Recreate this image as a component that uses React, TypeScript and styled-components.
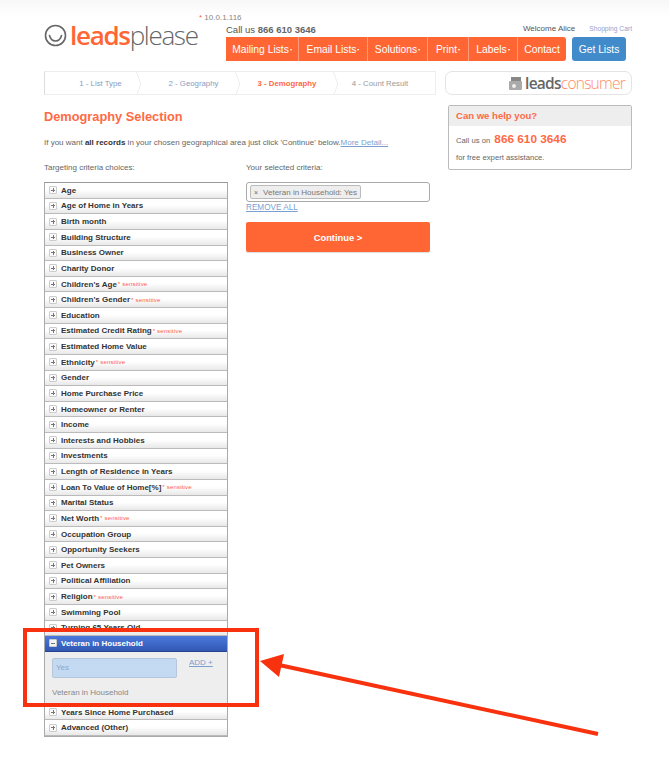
import { createGlobalStyle, styled } from 'styled-components';

const GlobalStyle = createGlobalStyle`
  html, body {
    margin: 0;
    padding: 0;
  }
  body {
    background: linear-gradient(#f7f7f7 0, #ffffff 16px) no-repeat #ffffff;
    font-family: "Liberation Sans", Arial, sans-serif;
    color: #555;
  }
`;

const Page = styled.div`
  position: relative;
  width: 669px;
  height: 779px;
  box-sizing: border-box;
  padding: 13px 37px 0 44px;
  overflow: hidden;
`;

// Header
const Header = styled.header`
  display: flex;
  height: 48px;
`;

const Brand = styled.div`
  width: 182px;
`;

const Ip = styled.div`
  height: 9px;
  padding-left: 155px;
  font-size: 8px;
  line-height: 9px;
  white-space: nowrap;
  color: #888;
  span {
    color: #ff6633;
  }
`;

const Logo = styled.div`
  display: flex;
  align-items: center;
  gap: 3px;
  height: 26px;
  line-height: 26px;
  font-family: "Open Sans", sans-serif;
  font-size: 26px;
  letter-spacing: -1.3px;
  color: #666;
  font-weight: 300;
  b {
    color: #ff6633;
    font-weight: 600;
  }
`;

const HeaderRight = styled.div`
  width: 406px;
`;

const TopLine = styled.div`
  display: flex;
  justify-content: space-between;
  height: 24px;
`;

const CallUs = styled.div`
  padding-top: 11px;
  font-size: 9.5px;
  line-height: 11px;
  color: #555;
  b {
    font-weight: 700;
    color: #666;
  }
`;

const Account = styled.div`
  display: flex;
  gap: 14px;
  align-items: baseline;
  padding-top: 10px;
  font-size: 8px;
  line-height: 11px;
  color: #555;
`;

const CartLink = styled.span`
  font-size: 6.7px;
  color: #8fa3d0;
`;

const NavLine = styled.nav`
  display: flex;
  gap: 6px;
`;

const NavBar = styled.div`
  display: flex;
  background: #ff6633;
  border-radius: 0 3px 3px 0;
`;

const NavItem = styled.div<{ $w: number }>`
  width: ${(p) => p.$w}px;
  height: 24px;
  box-sizing: border-box;
  display: flex;
  align-items: center;
  justify-content: center;
  font-size: 10.3px;
  color: #fff;
  white-space: nowrap;
  & + & {
    border-left: 1px solid #ff9c7c;
  }
`;

const Caret = styled.i`
  width: 0;
  height: 0;
  margin: 2px 0 0 1px;
  border-left: 1.5px solid transparent;
  border-right: 1.5px solid transparent;
  border-top: 2px solid #fff;
`;

const GetLists = styled.div`
  width: 54px;
  height: 24px;
  display: flex;
  align-items: center;
  justify-content: center;
  background: #428bca;
  border-radius: 3px;
  font-size: 10.3px;
  color: #fff;
`;

// Steps row
const StepRow = styled.div`
  display: flex;
  gap: 9px;
  margin-top: 10px;
`;

const Steps = styled.div`
  display: flex;
  width: 392px;
  height: 24px;
  box-sizing: border-box;
  border: 1px solid #eee;
  border-left-color: #ddd;
  overflow: hidden;
`;

const Step = styled.div<{ $w: number; $pl?: number; $pr?: number; $active?: boolean; $last?: boolean }>`
  position: relative;
  width: ${(p) => p.$w}px;
  box-sizing: border-box;
  padding: 0 ${(p) => p.$pr ?? 0}px 0 ${(p) => p.$pl ?? 0}px;
  display: flex;
  align-items: center;
  justify-content: center;
  font-size: 7.8px;
  font-weight: ${(p) => (p.$active ? 700 : 400)};
  color: ${(p) => (p.$active ? '#ff6a45' : p.$last ? '#999' : '#8a9cc0')};
  &::after {
    content: '';
    display: ${(p) => (p.$last ? 'none' : 'block')};
    position: absolute;
    right: -5px;
    top: 1.5px;
    width: 19px;
    height: 19px;
    border-top: 1px solid #ddd;
    border-right: 1px solid #ddd;
    transform: scaleX(0.35) rotate(45deg);
  }
`;

const ConsumerBadge = styled.div`
  width: 187px;
  height: 24px;
  box-sizing: border-box;
  display: flex;
  align-items: center;
  justify-content: flex-end;
  gap: 2px;
  padding-right: 6px;
  border: 1px solid #e4e4e4;
  border-radius: 7px;
  font-family: "Open Sans", sans-serif;
  font-size: 15.5px;
  letter-spacing: -0.75px;
  font-weight: 300;
  color: #ff8a66;
  b {
    color: #666;
    font-weight: 600;
  }
`;

// Main
const Main = styled.main`
  display: flex;
  margin-top: 10px;
`;

const Content = styled.div`
  width: 404px;
`;

const Title = styled.h1`
  margin: 4px 0 0;
  font-size: 12.8px;
  line-height: 16px;
  font-weight: 700;
  color: #ff6a45;
`;

const Intro = styled.p`
  margin: 12px 0 0;
  font-size: 8px;
  line-height: 11px;
  color: #666;
  white-space: nowrap;
  b {
    color: #333;
  }
`;

const Link = styled.a`
  color: #7b9fd0;
  text-decoration: underline;
`;

const Columns = styled.div`
  display: flex;
  gap: 18px;
  margin-top: 14px;
`;

const Column = styled.div`
  width: 184px;
`;

const ColumnLabel = styled.div`
  height: 20px;
  font-size: 8px;
  line-height: 11px;
  color: #666;
`;

const CriteriaList = styled.div`
  border: 1px solid #aaa;
  border-top-color: #999;
`;

const CriteriaRow = styled.div`
  height: 15.64px;
  box-sizing: border-box;
  display: flex;
  align-items: center;
  gap: 4px;
  padding-left: 4px;
  background: linear-gradient(#ffffff 45%, #e8e8e8);
  border-bottom: 1px solid #bbb;
  font-size: 8px;
  font-weight: 700;
  color: #333;
  white-space: nowrap;
`;

const ExpandedHead = styled(CriteriaRow)`
  background: linear-gradient(#4c78dc, #3158b4);
  border-bottom: 1px solid #26438c;
  color: #fff;
`;

const Toggle = styled.span<{ $open?: boolean }>`
  position: relative;
  width: 8px;
  height: 8px;
  flex: none;
  box-sizing: border-box;
  border: 1px solid #ccc;
  border-radius: 1px;
  background: ${(p) => (p.$open ? '#f4f4f4' : '#fafafa')};
  &::before {
    content: '';
    position: absolute;
    left: 1px;
    right: 1px;
    top: 2.5px;
    height: 1px;
    background: #777;
  }
  &::after {
    content: '';
    display: ${(p) => (p.$open ? 'none' : 'block')};
    position: absolute;
    top: 1px;
    bottom: 1px;
    left: 2.5px;
    width: 1px;
    background: #777;
  }
`;

const Sensitive = styled.span`
  margin-left: -3px;
  font-size: 6px;
  font-weight: 400;
  letter-spacing: 0.2px;
  color: #ff5a4a;
`;

const ExpandedBody = styled.div`
  height: 53px;
  box-sizing: border-box;
  padding: 6px 7px;
  background: #eeeeee;
  border-bottom: 1px solid #ccc;
`;

const AddLine = styled.div`
  display: flex;
  gap: 12px;
  font-size: 8px;
`;

const ValueBox = styled.div`
  width: 125px;
  height: 20px;
  box-sizing: border-box;
  padding-left: 3px;
  display: flex;
  align-items: center;
  background: #c3daf2;
  border: 1px solid #b5c6da;
  border-radius: 2px;
  font-size: 8px;
  color: #8aa8cc;
`;

const ExpandedNote = styled.div`
  margin-top: 10px;
  font-size: 8px;
  color: #888;
`;

const SelectedBox = styled.div`
  height: 20px;
  box-sizing: border-box;
  padding: 2px 3px;
  border: 1px solid #aaa;
  border-radius: 3px;
`;

const Chip = styled.div`
  display: flex;
  width: fit-content;
  align-items: center;
  gap: 5px;
  height: 14px;
  box-sizing: border-box;
  padding: 0 3px 0 3px;
  background: #eee;
  border: 1px solid #bbb;
  border-radius: 2px;
  font-size: 8px;
  color: #777;
  white-space: nowrap;
  i {
    font-style: normal;
    font-size: 7px;
    color: #666;
  }
`;

const RemoveAll = styled(Link)`
  display: block;
  font-size: 8.2px;
  line-height: 11px;
`;

const ContinueButton = styled.div`
  height: 30px;
  margin-top: 9px;
  display: flex;
  align-items: center;
  justify-content: center;
  background: #ff6633;
  border-radius: 2px;
  box-shadow: 0 1px 1px #ddd;
  font-size: 9.4px;
  font-weight: 700;
  color: #fff;
`;

// Help box
const HelpBox = styled.aside`
  width: 184px;
  height: 65px;
  box-sizing: border-box;
  border: 1px solid #bbb;
  border-radius: 2px;
  flex: none;
`;

const HelpHead = styled.div`
  height: 20px;
  padding-left: 7px;
  background: #eee;
  font-size: 9.55px;
  line-height: 20px;
  font-weight: 700;
  color: #ff6a45;
`;

const HelpBody = styled.div`
  padding: 6px 7px 0;
  font-size: 7.7px;
  line-height: 14px;
  color: #666;
  b {
    margin-left: 2px;
    font-size: 11.8px;
    color: #ff6a45;
  }
  div + div {
    margin-top: 4px;
    line-height: 11px;
  }
`;

// Annotation laid over the screenshot
const Callout = styled.div`
  position: absolute;
  left: 23px;
  top: 628px;
  width: 236px;
  height: 79px;
  box-sizing: border-box;
  border: 4px solid #f8320e;
`;

const Arrow = styled.svg`
  position: absolute;
  left: 255px;
  top: 650px;
  width: 350px;
  height: 90px;
`;

const choices: [string, boolean?][] = [
  ['Age'],
  ['Age of Home in Years'],
  ['Birth month'],
  ['Building Structure'],
  ['Business Owner'],
  ['Charity Donor'],
  ["Children's Age", true],
  ["Children's Gender", true],
  ['Education'],
  ['Estimated Credit Rating', true],
  ['Estimated Home Value'],
  ['Ethnicity', true],
  ['Gender'],
  ['Home Purchase Price'],
  ['Homeowner or Renter'],
  ['Income'],
  ['Interests and Hobbies'],
  ['Investments'],
  ['Length of Residence in Years'],
  ['Loan To Value of Home[%]', true],
  ['Marital Status'],
  ['Net Worth', true],
  ['Occupation Group'],
  ['Opportunity Seekers'],
  ['Pet Owners'],
  ['Political Affiliation'],
  ['Religion', true],
  ['Swimming Pool'],
  ['Turning 65 Years Old'],
];

const Row = ({ label, sensitive }: { label: string; sensitive?: boolean }) => (
  <CriteriaRow>
    <Toggle />
    <span>{label}</span>
    {sensitive && <Sensitive>* sensitive</Sensitive>}
  </CriteriaRow>
);

const App = () => (
  <>
    <GlobalStyle />
    <Page>
      <Header>
        <Brand>
          <Ip>
            <span>*</span> 10.0.1.116
          </Ip>
          <Logo>
            <svg width="23" height="23" viewBox="0 0 23 23" fill="none" stroke="#666" strokeWidth="1.6">
              <circle cx="11.5" cy="11.5" r="10" />
              <path d="M5.5 11.5c1 4 3.4 5.5 6 5.5s5-1.5 6-5.5" strokeLinecap="round" />
            </svg>
            <span>
              <b>leads</b>please
            </span>
          </Logo>
        </Brand>
        <HeaderRight>
          <TopLine>
            <CallUs>
              Call us <b>866 610 3646</b>
            </CallUs>
            <Account>
              <span>Welcome Alice</span>
              <CartLink>Shopping Cart</CartLink>
            </Account>
          </TopLine>
          <NavLine>
            <NavBar>
              <NavItem $w={72}>Mailing Lists<Caret /></NavItem>
              <NavItem $w={69}>Email Lists<Caret /></NavItem>
              <NavItem $w={60}>Solutions<Caret /></NavItem>
              <NavItem $w={41}>Print<Caret /></NavItem>
              <NavItem $w={49}>Labels<Caret /></NavItem>
              <NavItem $w={49}>Contact</NavItem>
            </NavBar>
            <GetLists>Get Lists</GetLists>
          </NavLine>
        </HeaderRight>
      </Header>

      <StepRow>
        <Steps>
          <Step $w={96} $pl={15}>1 - List Type</Step>
          <Step $w={99} $pl={6}>2 - Geography</Step>
          <Step $w={98} $pr={4} $active>3 - Demography</Step>
          <Step $w={97} $pr={13} $last>4 - Count Result</Step>
        </Steps>
        <ConsumerBadge>
          <svg width="15" height="15" viewBox="0 0 15 15">
            <rect x="3" y="1" width="10" height="5" fill="#888" />
            <rect x="1" y="5" width="13" height="9" rx="1" fill="#aaa" />
            <circle cx="6" cy="10" r="2" fill="#eee" />
          </svg>
          <span>
            <b>leads</b>consumer
          </span>
        </ConsumerBadge>
      </StepRow>

      <Main>
        <Content>
          <Title>Demography Selection</Title>
          <Intro>
            If you want <b>all records</b> in your chosen geographical area just click 'Continue' below.
            <Link>More Detail...</Link>
          </Intro>
          <Columns>
            <Column>
              <ColumnLabel>Targeting criteria choices:</ColumnLabel>
              <CriteriaList>
                {choices.map(([label, sensitive]) => (
                  <Row key={label} label={label} sensitive={sensitive} />
                ))}
                <ExpandedHead>
                  <Toggle $open />
                  <span>Veteran in Household</span>
                </ExpandedHead>
                <ExpandedBody>
                  <AddLine>
                    <ValueBox>Yes</ValueBox>
                    <Link>ADD +</Link>
                  </AddLine>
                  <ExpandedNote>Veteran in Household</ExpandedNote>
                </ExpandedBody>
                <Row label="Years Since Home Purchased" />
                <Row label="Advanced (Other)" />
              </CriteriaList>
            </Column>
            <Column>
              <ColumnLabel>Your selected criteria:</ColumnLabel>
              <SelectedBox>
                <Chip>
                  <i>×</i>Veteran in Household: Yes
                </Chip>
              </SelectedBox>
              <RemoveAll>REMOVE ALL</RemoveAll>
              <ContinueButton>Continue &gt;</ContinueButton>
            </Column>
          </Columns>
        </Content>
        <HelpBox>
          <HelpHead>Can we help you?</HelpHead>
          <HelpBody>
            <div>
              Call us on <b>866 610 3646</b>
            </div>
            <div>for free expert assistance.</div>
          </HelpBody>
        </HelpBox>
      </Main>

      <Callout />
      <Arrow viewBox="0 0 350 90">
        <line x1="343" y1="84" x2="24" y2="15" stroke="#f8320e" strokeWidth="4" />
        <path d="M5 11L29 4L24 27Z" fill="#f8320e" />
      </Arrow>
    </Page>
  </>
);

export default App;
